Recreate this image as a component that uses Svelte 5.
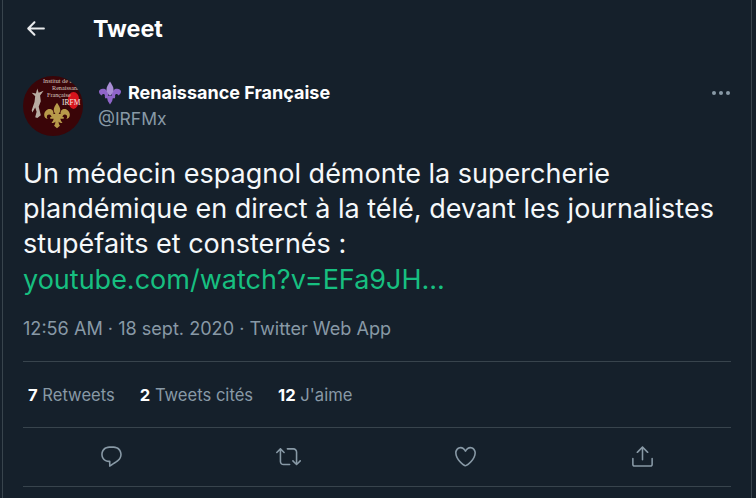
<script>
  const actions = [
    ['M14.046 2.242l-4.148-.01h-.002c-4.374 0-7.8 3.427-7.8 7.802 0 4.098 3.186 7.206 7.465 7.37v3.828c0 .108.044.286.12.403.142.225.384.347.632.347.138 0 .277-.038.402-.118.264-.168 6.473-4.14 8.088-5.506 1.902-1.61 3.04-3.97 3.043-6.312v-.017c-.006-4.367-3.43-7.787-7.8-7.788zm3.787 12.972c-1.134.96-4.862 3.405-6.772 4.643V16.67c0-.414-.335-.75-.75-.75h-.396c-3.66 0-6.318-2.476-6.318-5.886 0-3.534 2.768-6.302 6.3-6.302l4.147.01h.002c3.532 0 6.3 2.766 6.302 6.296-.003 1.91-.942 3.844-2.514 5.176z'],
    ['M23.77 15.67c-.292-.293-.767-.293-1.06 0l-2.22 2.22V7.65c0-2.068-1.683-3.75-3.75-3.75h-5.85c-.414 0-.75.336-.75.75s.336.75.75.75h5.85c1.24 0 2.25 1.01 2.25 2.25v10.24l-2.22-2.22c-.293-.293-.768-.293-1.06 0s-.294.768 0 1.06l3.5 3.5c.145.147.337.22.53.22s.383-.072.53-.22l3.5-3.5c.294-.292.294-.767 0-1.06zm-10.66 3.28H7.26c-1.24 0-2.25-1.01-2.25-2.25V6.46l2.22 2.22c.148.147.34.22.532.22s.384-.073.53-.22c.293-.293.293-.768 0-1.06l-3.5-3.5c-.293-.294-.768-.294-1.06 0l-3.5 3.5c-.294.292-.294.767 0 1.06s.767.293 1.06 0l2.22-2.22V16.7c0 2.068 1.683 3.75 3.75 3.75h5.85c.414 0 .75-.336.75-.75s-.337-.75-.75-.75z'],
    ['M12 21.638h-.014C9.403 21.59 1.95 14.856 1.95 8.478c0-3.064 2.525-5.754 5.403-5.754 2.29 0 3.83 1.58 4.646 2.73.814-1.148 2.354-2.73 4.645-2.73 2.88 0 5.404 2.69 5.404 5.755 0 6.376-7.454 13.11-10.037 13.157H12zM7.354 4.225c-2.08 0-3.903 1.988-3.903 4.255 0 5.74 7.034 11.596 8.55 11.658 1.518-.062 8.55-5.917 8.55-11.658 0-2.267-1.823-4.255-3.903-4.255-2.528 0-3.94 2.936-3.952 2.965-.23.562-1.156.562-1.387 0-.014-.03-1.425-2.965-3.954-2.965z'],
    ['M17.53 7.47l-5-5c-.293-.293-.768-.293-1.06 0l-5 5c-.294.293-.294.768 0 1.06s.767.294 1.06 0l3.72-3.72V15c0 .414.336.75.75.75s.75-.336.75-.75V4.81l3.72 3.72c.146.147.338.22.53.22s.384-.072.53-.22c.293-.293.293-.767 0-1.06z', 'M19.708 21.944H4.292C3.028 21.944 2 20.916 2 19.652V14c0-.414.336-.75.75-.75s.75.336.75.75v5.652c0 .437.355.792.792.792h15.416c.437 0 .792-.355.792-.792V14c0-.414.336-.75.75-.75s.75.336.75.75v5.652c0 1.264-1.028 2.292-2.292 2.292z']
  ];
  const fleur = 'M12 1c-1.6 2.2-2.8 4.2-2.8 6.2 0 1.5.8 2.6 1.5 3.6H8.9c.2-.9.1-2.2-.7-3.2C7.3 6.5 5.6 6.1 4.2 6.7 2.4 7.5 1 9.3 1 11.3c0 2 1.3 3.5 3 3.7-.5-.6-.8-1.3-.7-2.1.1-1 1-1.8 2-1.7 1.2.1 1.8 1.1 2 2H6.2v1.6h2.9c-.2 1.4-1 2.7-1.8 3.6 1.3.1 2.6-.4 3.4-1.3-.1 1.5-.5 2.7-1.2 3.7L12 23l2.5-2.2c-.7-1-1.1-2.2-1.2-3.7.8.9 2.1 1.4 3.4 1.3-.8-.9-1.6-2.2-1.8-3.6h2.9v-1.6h-1.1c.2-.9.8-1.9 2-2 1-.1 1.9.7 2 1.7.1.8-.2 1.5-.7 2.1 1.7-.2 3-1.7 3-3.7 0-2-1.4-3.8-3.2-4.6-1.4-.6-3.1-.2-4 .9-.8 1-.9 2.3-.7 3.2h-1.8c.7-1 1.5-2.1 1.5-3.6C14.8 5.2 13.6 3.2 12 1z';
</script>

<div class="page">
  <header class="top">
    <svg class="back" viewBox="0 0 24 24" aria-hidden="true"><path d="M20 11H7.414l4.293-4.293c.39-.39.39-1.023 0-1.414s-1.023-.39-1.414 0l-6 6c-.39.39-.39 1.023 0 1.414l6 6c.195.195.45.293.707.293s.512-.098.707-.293c.39-.39.39-1.023 0-1.414L7.414 13H20c.553 0 1-.447 1-1s-.447-1-1-1z"/></svg>
    <h1>Tweet</h1>
  </header>

  <main class="content">
    <div class="author">
      <div class="avatar">
        <span class="av-heart"></span>
        <span class="av-text"><span>Institut de la</span><span>Renaissance</span><span>Française</span></span>
        <span class="av-irfm">IRFM</span>
        <svg class="av-figure" viewBox="0 0 20 48" aria-hidden="true"><path d="M9 2l2 6 7-3-5 7 1 8-3 8 3 12-5 4-3-1 2-8-2-6-4 7-1-3 4-12 1-8-5-5 6 1z"/></svg>
        <svg class="av-fleur" viewBox="0 0 24 24" aria-hidden="true"><path d={fleur}/></svg>
      </div>
      <div class="names">
        <div class="name">
          <svg class="emoji" viewBox="0 0 24 24" aria-hidden="true">
            <path class="side" d="M10.5 15.5H6.6c.6-.9.3-2.2-.7-2.5-1-.3-2 .4-2 1.5C2 13.8.8 12.1 1 10.3 1.3 8.3 3.8 7.2 6 7.8c2.8.7 4.5 3.5 4.500 7.7z"/>
            <path class="side" d="M13.5 15.5h3.9c-.6-.9-.3-2.2.7-2.5 1-.3 2 .4 2 1.5 1.900-.7 3.100-2.400 2.900-4.200-.3-2-2.800-3.100-5-2.500-2.800.7-4.500 3.500-4.500 7.700z"/>
            <path class="side" d="M7 15h10v2.200h-2.200l-.6 2.800L12 23.500 9.800 20l-.6-2.800H7z"/>
            <path class="mid" d="M12 .5C10 3.500 8.500 6 8.500 8.500c0 2.500 1.500 4.500 3.500 6.500 2-2 3.500-4 3.500-6.500C15.500 6 14 3.500 12 .5z"/>
          </svg>
          <span>Renaissance Française</span>
        </div>
        <div class="handle">@IRFMx</div>
      </div>
      <div class="more"><i></i><i></i><i></i></div>
    </div>

    <p class="text">Un médecin espagnol démonte la supercherie<br />plandémique en direct à la télé, devant les journalistes<br />stupéfaits et consternés :<br /><span class="link">youtube.com/watch?v=EFa9JH...</span></p>

    <div class="meta">12:56 AM · 18 sept. 2020 · Twitter Web App</div>

    <div class="stats">
      <span><b>7</b> Retweets</span>
      <span><b>2</b> Tweets cités</span>
      <span><b>12</b> J'aime</span>
    </div>

    <div class="actions">
      {#each actions as paths}
        <svg viewBox="0 0 24 24" aria-hidden="true">
          {#each paths as d}<path {d}/>{/each}
        </svg>
      {/each}
    </div>
  </main>
</div>

<style>
  :global(body) {
    margin: 0;
    background: #15202b;
  }
  .page {
    box-sizing: border-box;
    width: 750px;
    height: 498px;
    margin-left: 2px;
    border-left: 1px solid #38444d;
    border-right: 1px solid #38444d;
    background: #15202b;
    overflow: hidden;
    font-family: Inter, "Liberation Sans", sans-serif;
    color: #fff;
  }
  .top {
    display: flex;
    align-items: center;
    height: 57px;
    padding-left: 20px;
    gap: 45px;
  }
  .back {
    width: 25px;
    height: 25px;
    fill: #e8eaec;
    flex: none;
  }
  h1 {
    margin: 0;
    font-size: 23.3px;
    font-weight: 700;
    color: #fff;
  }
  .content {
    padding: 0 20px;
  }
  .author {
    display: flex;
    align-items: center;
    height: 60px;
    margin-top: 19px;
  }
  .avatar {
    position: relative;
    width: 60px;
    height: 60px;
    border-radius: 50%;
    overflow: hidden;
    flex: none;
    background: #3a0508;
  }
  .av-text {
    position: absolute;
    left: 20px;
    top: 2px;
    display: flex;
    flex-direction: column;
    align-items: flex-start;
    font: 6.2px/6.8px "Liberation Serif", serif;
    color: #d8c9c0;
    white-space: nowrap;
  }
  .av-text span:nth-child(2) { margin-left: 9px; }
  .av-text span:nth-child(3) { margin-left: 4px; }
  .av-irfm {
    position: absolute;
    left: 39px;
    top: 23px;
    font: 7.5px/7px "Liberation Serif", serif;
    color: #f0e6e0;
  }
  .av-heart {
    position: absolute;
    left: 45px;
    top: 16px;
    width: 11px;
    height: 17px;
    border-radius: 50% 50% 50% 50% / 40% 40% 60% 60%;
    background: #d8141c;
  }
  .av-figure {
    position: absolute;
    left: 8px;
    top: 9px;
    width: 14px;
    height: 38px;
    fill: #b8aca2;
  }
  .av-fleur {
    position: absolute;
    left: 20px;
    top: 22px;
    width: 28px;
    height: 35px;
    fill: #b79a4a;
  }
  .names {
    margin-left: 15px;
    flex: 1;
  }
  .name {
    display: flex;
    align-items: center;
    gap: 6px;
    font-size: 18px;
    line-height: 24px;
    font-weight: 700;
    color: #fff;
  }
  .emoji {
    width: 24px;
    height: 24px;
    flex: none;
  }
  .side { fill: #8f65c9; }
  .mid { fill: #aa8ed6; }
  .handle {
    font-size: 17.5px;
    line-height: 27px;
    color: #8899a6;
  }
  .more {
    display: flex;
    gap: 3px;
    align-self: flex-start;
    margin: 15px 1px 0 0;
  }
  .more i {
    width: 4px;
    height: 4px;
    border-radius: 50%;
    background: #8899a6;
  }
  .text {
    margin: 20px 0 0;
    font-size: 27px;
    line-height: 35.2px;
    color: #f5f8fa;
    white-space: nowrap;
  }
  .link {
    color: #17bf80;
  }
  .meta {
    margin-top: 19px;
    font-size: 18.1px;
    line-height: 24px;
    color: #8899a6;
    padding-bottom: 21px;
    border-bottom: 1px solid #38444d;
  }
  .stats {
    box-sizing: border-box;
    display: flex;
    gap: 25px;
    height: 66px;
    align-items: center;
    padding: 1px 0 0 5px;
    font-size: 16.6px;
    color: #8899a6;
    border-bottom: 1px solid #38444d;
  }
  .stats b {
    color: #fff;
    font-weight: 700;
  }
  .actions {
    display: flex;
    justify-content: space-around;
    align-items: center;
    height: 58px;
    border-bottom: 1px solid #38444d;
  }
  .actions svg {
    width: 25px;
    height: 25px;
    fill: #8899a6;
  }
</style>
